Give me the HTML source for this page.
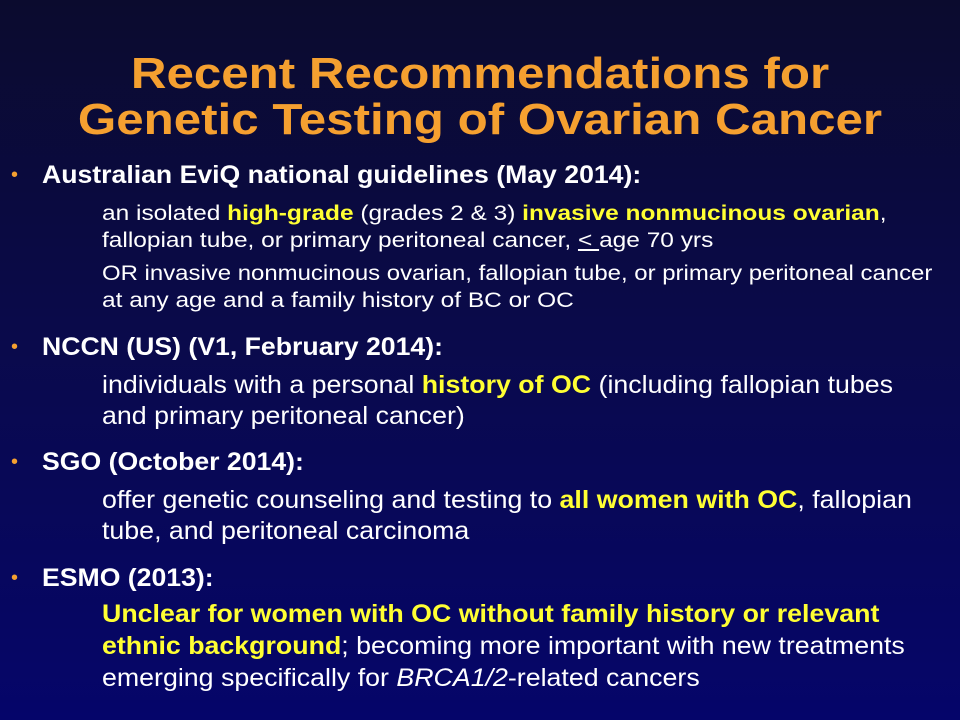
<!DOCTYPE html>
<html><head><meta charset="utf-8"><style>
html,body{margin:0;padding:0}
body{width:960px;height:720px;overflow:hidden;position:relative;font-family:"Liberation Sans",Arial,sans-serif;
background:linear-gradient(to bottom,#0b0b2e 0%,#0a0a4a 45%,#05056a 100%);color:#fff}
.t{position:absolute;left:0;width:960px;text-align:center;color:#f5a030;font-weight:bold;font-size:44px;line-height:50px;white-space:nowrap;transform:scaleX(1.12);transform-origin:480px 0;margin-top:-3px}
.l{position:absolute;white-space:nowrap;transform-origin:0 0}
.h{left:42px;font-size:25px;font-weight:bold;line-height:29px;transform:scaleX(1.065);margin-top:-2px}
.s{left:102px;font-size:21px;line-height:23px;transform:scaleX(1.165);margin-top:-1px}
.m{left:102px;font-size:25px;line-height:29px;transform:scaleX(1.07);margin-top:-2px}
.b{position:absolute;left:11px;color:#f5a030;font-size:20px;line-height:24px}
.y{color:#ffff33;font-weight:bold}
</style></head><body>
<div class="t" style="top:52px">Recent Recommendations for</div>
<div class="t" style="top:98px">Genetic Testing of Ovarian Cancer</div>

<div class="b" style="top:163px">•</div>
<div class="l h" style="top:163px">Australian EviQ national guidelines (May 2014):</div>
<div class="l s" style="top:203px">an isolated <span class="y">high-grade</span> (grades 2 &amp; 3) <span class="y">invasive nonmucinous ovarian</span>,</div>
<div class="l s" style="top:230px">fallopian tube, or primary peritoneal cancer, <u>&lt; </u>age 70 yrs</div>
<div class="l s" style="top:263px;transform:scaleX(1.14)">OR invasive nonmucinous ovarian, fallopian tube, or primary peritoneal cancer</div>
<div class="l s" style="top:290px">at any age and a family history of BC or OC</div>

<div class="b" style="top:335px">•</div>
<div class="l h" style="top:335px">NCCN (US) (V1, February 2014):</div>
<div class="l m" style="top:373px">individuals with a personal <span class="y">history of OC</span> (including fallopian tubes</div>
<div class="l m" style="top:404px">and primary peritoneal cancer)</div>

<div class="b" style="top:450px">•</div>
<div class="l h" style="top:450px">SGO (October 2014):</div>
<div class="l m" style="top:488px">offer genetic counseling and testing to <span class="y">all women with OC</span>, fallopian</div>
<div class="l m" style="top:519px">tube, and peritoneal carcinoma</div>

<div class="b" style="top:566px">•</div>
<div class="l h" style="top:566px">ESMO (2013):</div>
<div class="l m" style="top:602px"><span class="y">Unclear for women with OC without family history or relevant</span></div>
<div class="l m" style="top:634px"><span class="y">ethnic background</span>; becoming more important with new treatments</div>
<div class="l m" style="top:666px">emerging specifically for <i>BRCA1/2</i>-related cancers</div>
</body></html>
